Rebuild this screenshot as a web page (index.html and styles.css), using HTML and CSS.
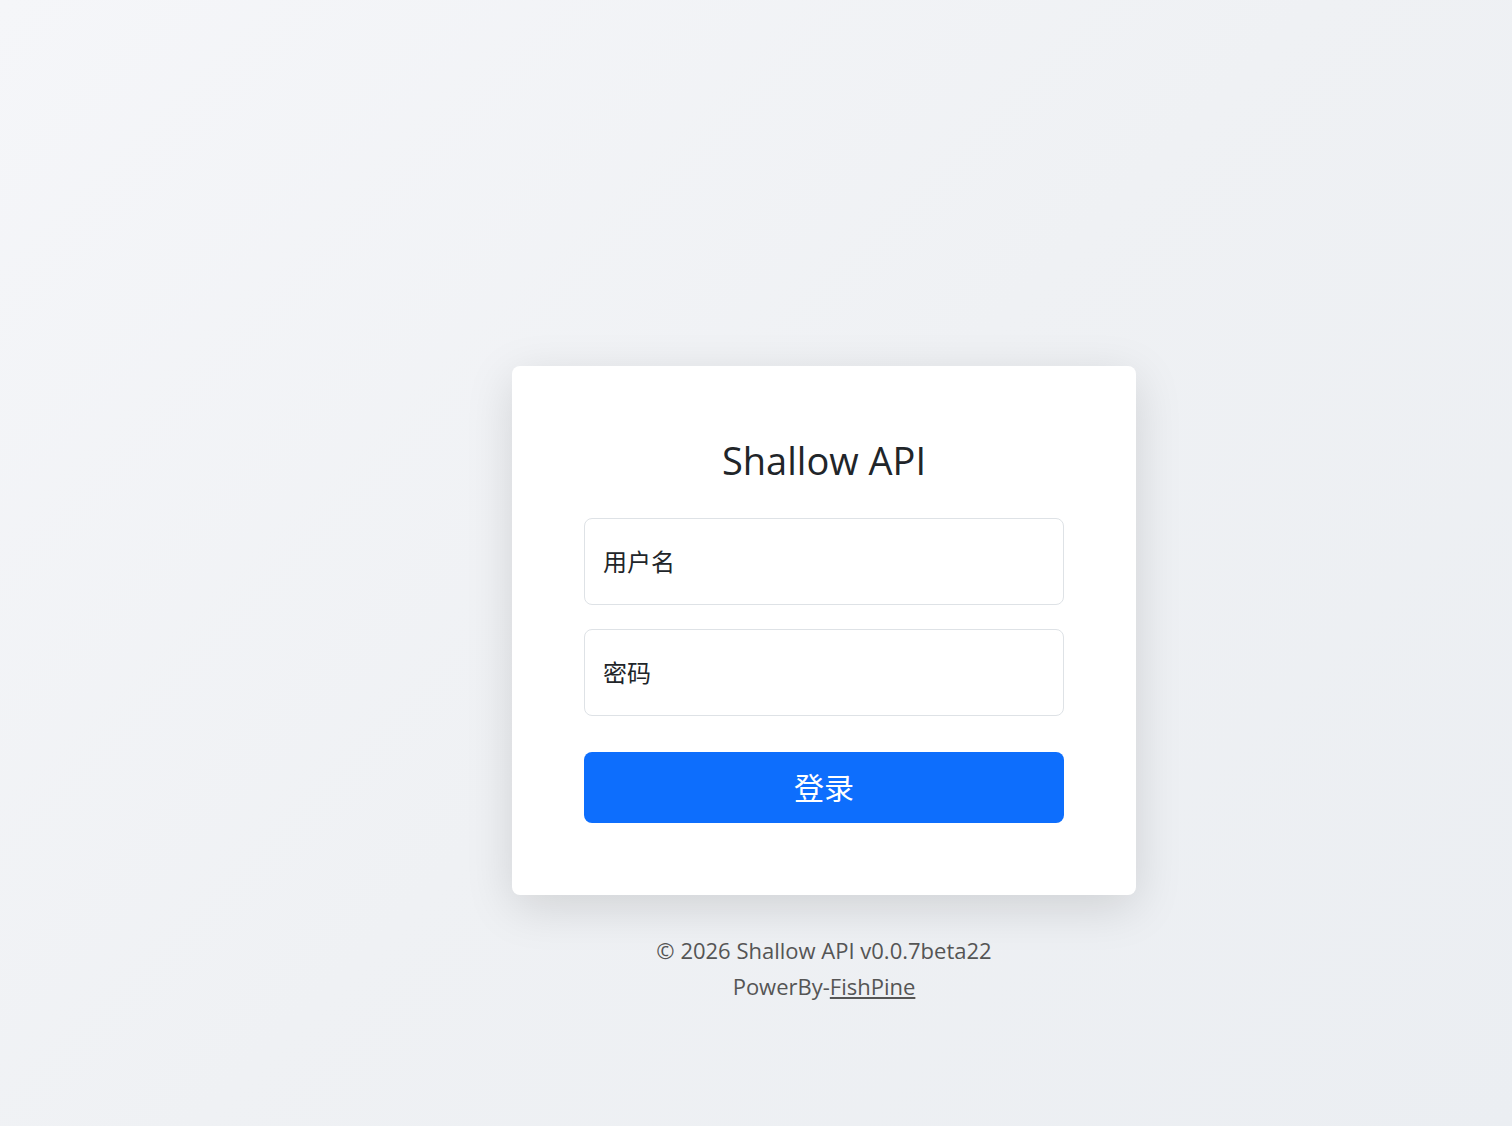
FILE: index.html
```html
<!DOCTYPE html>
<html lang="zh-CN">
<head>
  <meta charset="UTF-8" />
  <meta name="viewport" content="width=device-width, initial-scale=1.0" />
  <title>Shallow API</title>
  <link rel="stylesheet" href="styles.css">
</head>
<body>
  <div class="wrap">
    <div class="card">
      <h1>Shallow API</h1>
      <form class="login">
        <input type="text" name="username" placeholder="用户名">
        <input type="password" name="password" placeholder="密码">
        <button type="submit">登录</button>
      </form>
    </div>
    <footer>
      <div>© 2026 Shallow API v0.0.7beta22</div>
      <div>PowerBy-<a href="#">FishPine</a></div>
    </footer>
  </div>
</body>
</html>
```

FILE: styles.css
```css
html, body {
  margin: 0;
  padding: 0;
  min-height: 100vh;
}
body {
  font-family: "Open Sans", "Noto Sans CJK SC", sans-serif;
  background: linear-gradient(135deg, #f5f6f9 0%, #eff1f4 50%, #ebeef2 100%);
  color: #212529;
}
.wrap {
  width: 624px;
  margin-left: calc(50% - 244px);
  padding-top: 366px;
}
.card {
  background: #fff;
  border-radius: 8px;
  padding: 72px;
  box-shadow: 0 12px 48px rgba(0, 0, 0, 0.13);
}
h1 {
  margin: 0 0 36px;
  font-size: 38px;
  font-weight: 400;
  line-height: 44px;
  text-align: center;
  color: #212529;
}
.login {
  display: flex;
  flex-direction: column;
}
.login input {
  height: 87px;
  box-sizing: border-box;
  padding: 0 18px;
  margin-bottom: 24px;
  border: 1px solid #dee2e6;
  border-radius: 8px;
  font-family: inherit;
  font-size: 24px;
  color: #212529;
  background: #fff;
}
.login input::placeholder {
  color: #212529;
}
.login button {
  height: 71px;
  margin-top: 12px;
  padding: 0 0 4px;
  border: none;
  border-radius: 8px;
  background: #0d6efd;
  color: #fff;
  font-family: inherit;
  font-size: 30px;
  cursor: pointer;
}
footer {
  margin-top: 37px;
  text-align: center;
  font-size: 22px;
  line-height: 36px;
  color: #555;
}
footer a {
  color: #555;
}
```
